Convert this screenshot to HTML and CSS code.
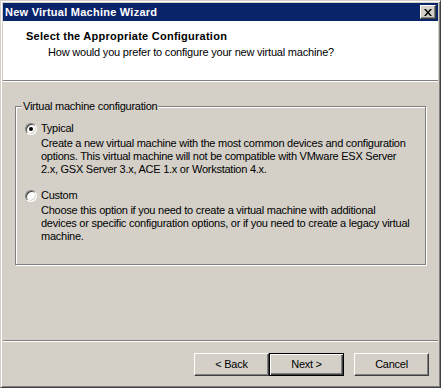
FILE: index.html
```html
<!DOCTYPE html>
<html lang="en">
<head>
    <meta charset="UTF-8">
    <title>New Virtual Machine Wizard</title>
    <link rel="stylesheet" href="styles.css">
</head>
<body>
    <div class="window">
        <div class="titlebar">
            <span class="title">New Virtual Machine Wizard</span>
            <div class="close-btn">
                <svg width="8" height="7" viewBox="0 0 8 7">
                    <path d="M0 0h2l2 2.5L6 0h2L5 3.5 8 7H6L4 4.5 2 7H0l3-3.5z" fill="#000"/>
                </svg>
            </div>
        </div>

        <div class="header">
            <div class="header-title">Select the Appropriate Configuration</div>
            <div class="header-sub">How would you prefer to configure your new virtual machine?</div>
        </div>
        <div class="sep"></div>

        <div class="content">
            <fieldset class="group">
                <legend>Virtual machine configuration</legend>

                <div class="option">
                    <div class="option-row">
                        <span class="radio checked"></span>
                        <span>Typical</span>
                    </div>
                    <div class="option-desc">
                        Create a new virtual machine with the most common devices and configuration<br>
                        options. This virtual machine will not be compatible with VMware ESX Server<br>
                        2.x, GSX Server 3.x, ACE 1.x or Workstation 4.x.
                    </div>
                </div>

                <div class="option">
                    <div class="option-row">
                        <span class="radio"></span>
                        <span>Custom</span>
                    </div>
                    <div class="option-desc">
                        Choose this option if you need to create a virtual machine with additional<br>
                        devices or specific configuration options, or if you need to create a legacy virtual<br>
                        machine.
                    </div>
                </div>
            </fieldset>
        </div>

        <div class="sep"></div>
        <div class="footer">
            <div class="btn">&lt; Back</div>
            <div class="btn default">Next &gt;</div>
            <div class="btn cancel">Cancel</div>
        </div>
    </div>
</body>
</html>
```

FILE: styles.css
```css
body {
    margin: 0;
    font-family: "Liberation Sans", Arial, sans-serif;
    font-size: 11px;
    line-height: 13px;
    letter-spacing: -0.25px;
    color: #000;
    background: #d4d0c8;
}

.window {
    width: 441px;
    height: 388px;
    box-sizing: border-box;
    border: 1px solid;
    border-color: #d4d0c8 #404040 #404040 #d4d0c8;
    box-shadow: inset 1px 1px 0 #fff, inset -1px -1px 0 #808080;
    padding: 2px;
    background: #d4d0c8;
    display: flex;
    flex-direction: column;
}

/* title bar */
.titlebar {
    height: 18px;
    background: #0a246a;
    display: flex;
    align-items: center;
    justify-content: space-between;
    padding: 0 2px 0 2px;
}

.title {
    color: #fff;
    font-weight: bold;
    letter-spacing: 0.25px;
}

.close-btn {
    width: 16px;
    height: 14px;
    box-sizing: border-box;
    background: #d4d0c8;
    border: 1px solid;
    border-color: #fff #404040 #404040 #fff;
    box-shadow: inset -1px -1px 0 #808080;
    display: flex;
    align-items: center;
    justify-content: center;
}

/* header */
.header {
    height: 59px;
    box-sizing: border-box;
    background: #fff;
    padding: 9px 0 0 23px;
}

.header-title {
    font-weight: bold;
    letter-spacing: 0.25px;
}

.header-sub {
    padding-left: 22px;
    margin-top: 3px;
    letter-spacing: -0.2px;
}

.sep {
    border-top: 1px solid #808080;
    border-bottom: 1px solid #fff;
}

/* body */
.content {
    flex: 1;
    padding: 18px 12px 0 12px;
}

.group {
    margin: 0;
    padding: 8px 9px 21px 9px;
    border: 1px solid #808080;
    box-shadow: inset 1px 1px 0 #fff, 1px 1px 0 #fff;
}

.group legend {
    padding: 0 1px;
    margin-left: -3px;
    background: #d4d0c8;
}

.option + .option {
    margin-top: 12px;
}

.option-row {
    display: flex;
    align-items: center;
    gap: 4px;
    height: 15px;
}

.option-desc {
    padding-left: 16px;
    margin-top: 1px;
    white-space: nowrap;
}

.radio {
    width: 12px;
    height: 12px;
    box-sizing: border-box;
    border-radius: 50%;
    border: 1px solid;
    border-color: #808080 #fff #fff #808080;
    box-shadow: inset 1px 1px 0 #404040, inset -1px -1px 0 #d4d0c8;
    background: #fff;
    display: flex;
    align-items: center;
    justify-content: center;
}

.radio.checked::after {
    content: "";
    width: 4px;
    height: 4px;
    border-radius: 50%;
    background: #000;
}

/* buttons */
.footer {
    flex: none;
    height: 43px;
    box-sizing: border-box;
    padding: 11px 9px 0 0;
    display: flex;
    justify-content: flex-end;
    align-items: flex-start;
}

.btn {
    width: 75px;
    height: 23px;
    box-sizing: border-box;
    border: 1px solid;
    border-color: #fff #404040 #404040 #fff;
    box-shadow: inset -1px -1px 0 #808080;
    display: flex;
    align-items: center;
    justify-content: center;
}

.btn.default {
    border: 1px solid #000;
    box-shadow: inset 1px 1px 0 #fff, inset -1px -1px 0 #404040, inset -2px -2px 0 #808080;
}

.btn.cancel {
    margin-left: 10px;
}
```
